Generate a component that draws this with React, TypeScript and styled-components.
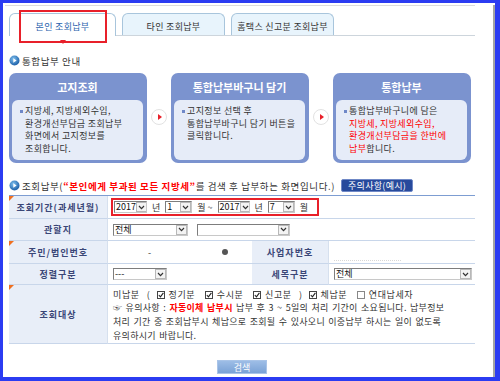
import React from 'react'
import styled, { createGlobalStyle } from 'styled-components'

const GlobalStyle = createGlobalStyle`
  html, body {
    margin: 0;
    padding: 0;
    background: #2b3cf2;
  }
  body {
    font-family: "Noto Sans CJK KR", "Noto Sans", sans-serif;
    overflow: hidden;
  }
  * {
    box-sizing: border-box;
  }
`

const Frame = styled.div`
  width: 500px;
  height: 381px;
  border-style: solid;
  border-color: #2b3cf2;
  border-width: 3px 5px 4px 3px;
  background: #fff;
  overflow: hidden;
`

const Page = styled.div`
  height: 100%;
  border-right: 2px solid #a4a4a4;
`

const TopRule = styled.div`
  width: 470px;
  height: 1px;
  margin: 2px 0 0 2px;
  background: #dcdcdc;
`

const Content = styled.div`
  width: 466px;
  margin-left: 6px;
  color: #333;
  font-size: 9px;
`

const TabBar = styled.div`
  display: flex;
  align-items: flex-end;
  height: 30px;
  border-bottom: 1px solid #cdd5dc;
`

const Tab = styled.div<{ $w: number; $active?: boolean }>`
  position: relative;
  width: ${(p) => p.$w}px;
  height: ${(p) => (p.$active ? 23 : 22)}px;
  margin-right: 6px;
  margin-bottom: ${(p) => (p.$active ? -1 : 0)}px;
  padding-top: 3px;
  display: flex;
  align-items: center;
  justify-content: center;
  border: 1px solid #a8c5dc;
  border-bottom: none;
  border-radius: 6px 6px 0 0;
  background: ${(p) => (p.$active ? '#fff' : '#e8f4fc')};
  color: ${(p) => (p.$active ? '#2a5fae' : '#333')};
  font-size: 9px;
  letter-spacing: 0.3px;
`

const RedBox = styled.div`
  position: absolute;
  left: 9px;
  top: -4px;
  width: 88px;
  height: 33px;
  border: 2px solid #e8202a;
`

const TabPointer = styled.span`
  position: absolute;
  left: 50px;
  top: 26px;
  border-left: 3px solid transparent;
  border-right: 3px solid transparent;
  border-top: 4px solid #e8202a;
`

const SectionTitle = styled.div<{ $top: number }>`
  display: flex;
  align-items: center;
  gap: 2px;
  height: 13px;
  margin-top: ${(p) => p.$top}px;
  font-size: 9.5px;
  letter-spacing: 0.6px;
  color: #333;
`

const CardRow = styled.div`
  display: flex;
  align-items: flex-start;
  margin-top: 6px;
`

const Card = styled.div`
  width: 138px;
  height: 90px;
  padding: 0 4px 3px 3px;
  border-radius: 7px;
  background: #7b93cf;
`

const CardHead = styled.div`
  height: 27px;
  display: flex;
  align-items: center;
  justify-content: center;
  color: #fff;
  font-size: 11px;
  font-weight: bold;
`

const CardBody = styled.div`
  display: flex;
  height: 60px;
  padding: 5px 2px 0 8px;
  border-radius: 6px;
  background: #e6ecf8;
  font-size: 9px;
  line-height: 12.6px;
  letter-spacing: 0.35px;
  white-space: nowrap;
  color: #333;
`

const Bullet = styled.span`
  flex: none;
  width: 3px;
  height: 3px;
  margin: 5px 2px 0 0;
  background: #6f88c8;
`

const Red = styled.span<{ $bold?: boolean }>`
  color: #ff0000;
  font-weight: ${(p) => (p.$bold ? 'bold' : 'normal')};
`

const ArrowSlot = styled.div`
  width: 24px;
  display: flex;
  justify-content: center;
  padding-top: 36px;
`

const ArrowCircle = styled.span`
  width: 16px;
  height: 16px;
  border-radius: 50%;
  border: 1px solid #e2e2e2;
  background: #fff;
  display: flex;
  align-items: center;
  justify-content: center;

  &::after {
    content: '';
    margin-left: 2px;
    border-top: 3px solid transparent;
    border-bottom: 3px solid transparent;
    border-left: 4px solid #e8202a;
  }
`

const NoticeButton = styled.span`
  height: 13px;
  margin-left: 4px;
  padding: 0 6px;
  display: inline-flex;
  align-items: center;
  border: 1px solid #6f88c6;
  border-radius: 2px;
  background: #274a9c;
  color: #fff;
  font-size: 9px;
  letter-spacing: 0.3px;
`

const Table = styled.div`
  display: grid;
  grid-template-columns: 99px 144px 77px 1fr;
  grid-template-rows: 23px 22px 23px 21px 59px;
  margin-top: 3px;
  border-top: 1px solid #7d9dd2;
`

const Label = styled.div<{ $mark?: boolean }>`
  position: relative;
  display: flex;
  align-items: center;
  justify-content: center;
  background: #e8eef8;
  border-bottom: 1px solid #c8d6ea;
  border-right: 1px solid #d6e0ee;
  color: #3a4677;
  font-size: 9px;
  font-weight: bold;
  letter-spacing: 1px;

  &::before {
    content: '';
    display: ${(p) => (p.$mark ? 'block' : 'none')};
    position: absolute;
    left: 0;
    top: 0;
    border-top: 5px solid #f07020;
    border-right: 5px solid transparent;
  }
`

const Cell = styled.div<{ $span?: number; $pad?: number }>`
  grid-column: span ${(p) => p.$span ?? 1};
  display: flex;
  align-items: center;
  gap: 9px;
  padding-left: ${(p) => p.$pad ?? 5}px;
  border-bottom: 1px solid #c8d6ea;
  font-size: 9px;
  color: #333;
`

const NoteCell = styled.div`
  grid-column: span 3;
  padding: 3px 0 0 5px;
  border-bottom: 1px solid #c8d6ea;
  font-size: 9px;
  line-height: 14px;
  color: #333;
  letter-spacing: 0.3px;
  word-spacing: 1px;
`

const Period = styled.span`
  display: inline-flex;
  align-items: center;
  height: 18px;
  padding: 0 4px 0 1px;
  border: 2px solid #e8202a;
`

const Unit = styled.span`
  padding: 0 5px;
  font-size: 9px;
`

const SelectBox = styled.span<{ $w: number }>`
  display: inline-flex;
  align-items: center;
  width: ${(p) => p.$w}px;
  height: 12px;
  padding-left: 1px;
  border: 1px solid #7d7d7d;
  border-right-color: #c8c8c8;
  border-bottom-color: #c8c8c8;
  background: #fff;
  color: #111;
  font-size: 9px;
  line-height: 10px;
  overflow: hidden;
`

const SelectArrow = styled.span`
  flex: none;
  display: flex;
  align-items: center;
  justify-content: center;
  width: 11px;
  height: 10px;
  margin-left: auto;
  border: 1px solid #b8b8b8;
  background: #f3f3f3;
`

const Dot = styled.span`
  width: 6px;
  height: 6px;
  border-radius: 50%;
  background: #555;
  margin-left: 62px;
`

const DottedField = styled.span`
  width: 67px;
  height: 10px;
  margin-top: 8px;
  border-bottom: 1px dotted #d8d8d8;
`

const CheckLine = styled.div`
  display: flex;
  align-items: center;
  height: 13px;
  white-space: nowrap;
  letter-spacing: 0.6px;
`

const Check = styled.span<{ $on?: boolean }>`
  display: inline-flex;
  align-items: center;
  justify-content: center;
  width: 8px;
  height: 8px;
  margin: 0 4px 0 6px;
  border: 1px solid ${(p) => (p.$on ? '#444' : '#888')};
  background: #fff;
`

const SearchButton = styled.div`
  width: 50px;
  height: 14px;
  margin: 16px auto 0;
  display: flex;
  align-items: center;
  justify-content: center;
  border: 1px solid #a9c4e8;
  background: linear-gradient(#9dbde6, #7aa2d6);
  color: #fff;
  font-size: 9px;
`

const BlueIcon = () => (
  <svg width="11" height="11" viewBox="0 0 11 11">
    <defs>
      <radialGradient id="bi" cx="40%" cy="35%" r="65%">
        <stop offset="0" stopColor="#7fc0ee" />
        <stop offset="1" stopColor="#1c5fa8" />
      </radialGradient>
    </defs>
    <circle cx="5.5" cy="5.5" r="5" fill="url(#bi)" />
    <path d="M4.3 3.2 L7.6 5.5 L4.3 7.8 Z" fill="#fff" />
  </svg>
)

const Chevron = () => (
  <svg width="7" height="5" viewBox="0 0 7 5">
    <path d="M1 1 L3.5 3.6 L6 1" fill="none" stroke="#333" strokeWidth="1.2" />
  </svg>
)

const CheckMark = () => (
  <svg width="6" height="6" viewBox="0 0 6 6">
    <path d="M0.8 3 L2.4 4.8 L5.4 0.8" fill="none" stroke="#222" strokeWidth="1.1" />
  </svg>
)

const Select = ({ w, value }: { w: number; value?: string }) => (
  <SelectBox $w={w}>
    {value}
    <SelectArrow>
      <Chevron />
    </SelectArrow>
  </SelectBox>
)

const CheckItem = ({ on, label }: { on?: boolean; label: string }) => (
  <>
    <Check $on={on}>{on && <CheckMark />}</Check>
    {label}
  </>
)

const guide = [
  {
    title: '고지조회',
    body: (
      <>
        지방세, 지방세외수입,
        <br />
        환경개선부담금 조회납부
        <br />
        화면에서 고지정보를
        <br />
        조회합니다.
      </>
    ),
  },
  {
    title: '통합납부바구니 담기',
    body: (
      <>
        고지정보 선택 후
        <br />
        통합납부바구니 담기 버튼을
        <br />
        클릭합니다.
      </>
    ),
  },
  {
    title: '통합납부',
    body: (
      <>
        통합납부바구니에 담은
        <br />
        <Red>
          지방세, 지방세외수입,
          <br />
          환경개선부담금을 한번에
          <br />
          납부
        </Red>
        합니다.
      </>
    ),
  },
]

const App = () => {
  return (
    <>
      <GlobalStyle />
      <Frame>
        <Page>
          <TopRule />
          <Content>
            <TabBar>
              <Tab $w={107} $active>
                본인 조회납부
                <RedBox />
                <TabPointer />
              </Tab>
              <Tab $w={103}>타인 조회납부</Tab>
              <Tab $w={103}>홈택스 신고분 조회납부</Tab>
            </TabBar>

            <SectionTitle $top={18}>
              <BlueIcon />
              통합납부 안내
            </SectionTitle>

            <CardRow>
              {guide.map((g, i) => (
                <React.Fragment key={g.title}>
                  {i > 0 && (
                    <ArrowSlot>
                      <ArrowCircle />
                    </ArrowSlot>
                  )}
                  <Card>
                    <CardHead>{g.title}</CardHead>
                    <CardBody>
                      <Bullet />
                      <div>{g.body}</div>
                    </CardBody>
                  </Card>
                </React.Fragment>
              ))}
            </CardRow>

            <SectionTitle $top={16}>
              <BlueIcon />
              <span>
                조회납부(<Red $bold>“본인에게 부과된 모든 지방세”</Red>를 검색 후 납부하는
                화면입니다.)
              </span>
              <NoticeButton>주의사항(예시)</NoticeButton>
            </SectionTitle>

            <Table>
              <Label $mark>조회기간(과세년월)</Label>
              <Cell $span={3} $pad={3}>
                <Period>
                  <Select w={33} value="2017" />
                  <Unit>년</Unit>
                  <Select w={27} value="1" />
                  <Unit>월 ~</Unit>
                  <Select w={32} value="2017" />
                  <Unit>년</Unit>
                  <Select w={27} value="7" />
                  <Unit>월</Unit>
                </Period>
              </Cell>

              <Label>관할지</Label>
              <Cell $span={3}>
                <Select w={75} value="전체" />
                <Select w={93} />
              </Cell>

              <Label $mark>주민/법인번호</Label>
              <Cell $pad={40}>
                <span>-</span>
                <Dot />
              </Cell>
              <Label>사업자번호</Label>
              <Cell>
                <DottedField />
              </Cell>

              <Label>정렬구분</Label>
              <Cell>
                <Select w={54} value="---" />
              </Cell>
              <Label>세목구분</Label>
              <Cell>
                <Select w={138} value="전체" />
              </Cell>

              <Label $mark>조회대상</Label>
              <NoteCell>
                <CheckLine>
                  미납분 &nbsp;(
                  <CheckItem on label="정기분" />
                  &nbsp;
                  <CheckItem on label="수시분" />
                  &nbsp;
                  <CheckItem on label="신고분" />
                  &nbsp;&nbsp;)
                  <CheckItem on label="체납분" />
                  &nbsp;
                  <CheckItem label="연대납세자" />
                </CheckLine>
                ☞ 유의사항 : <Red $bold>자동이체 납부시</Red> 납부 후 3 ~ 5일의 처리 기간이
                소요됩니다. 납부정보
                <br />
                처리 기간 중 조회납부시 체납으로 조회될 수 있사오니 이중납부 하시는 일이
                없도록
                <br />
                유의하시기 바랍니다.
              </NoteCell>
            </Table>

            <SearchButton>검색</SearchButton>
          </Content>
        </Page>
      </Frame>
    </>
  )
}

export default App
